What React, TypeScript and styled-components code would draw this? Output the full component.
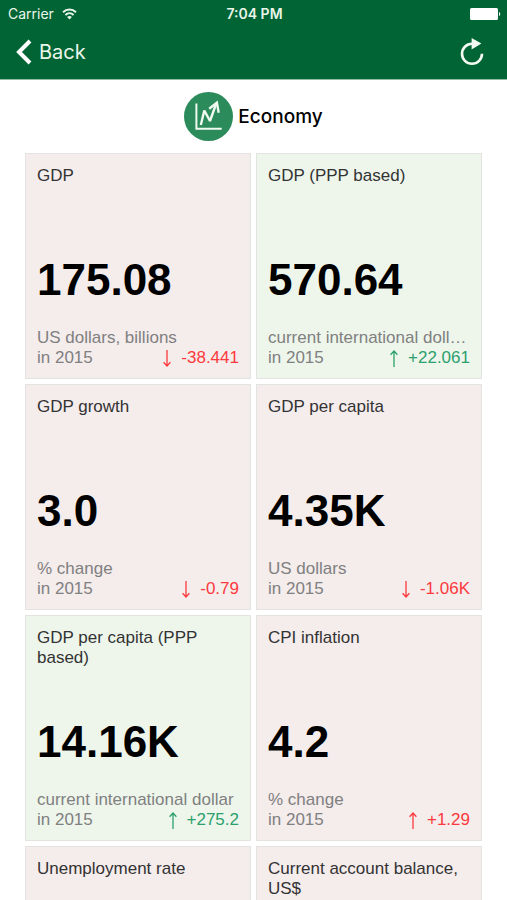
import React from "react";
import styled, { createGlobalStyle } from "styled-components";

const GlobalStyle = createGlobalStyle`
  * { box-sizing: border-box; }
  body { margin: 0; background: #ffffff; }
`;

const Screen = styled.div`
  display: flex;
  flex-direction: column;
  height: 100vh;
  background: #ffffff;
  color: #000000;
  font-family: "Liberation Sans", Arial, sans-serif;
`;

const Header = styled.header`
  flex: none;
  background: #006435;
  color: #eaf6ea;
  border-bottom: 1px solid #8fbca5;
  font-family: Inter, sans-serif;
`;

const StatusBar = styled.div`
  display: grid;
  grid-template-columns: 1fr auto 1fr;
  align-items: center;
  height: 28px;
  padding: 0 6px 0 8px;
  font-size: 14px;
  line-height: 20px;
`;

const Carrier = styled.div`
  display: flex;
  align-items: center;
  gap: 8px;
`;

const Clock = styled.time`
  font-size: 14px;
  font-weight: 600;
`;

const Battery = styled.svg`
  justify-self: end;
`;

const NavBar = styled.nav`
  display: flex;
  align-items: center;
  justify-content: space-between;
  height: 51px;
  padding: 0 23px 3px 16px;
`;

const NavButton = styled.button`
  display: flex;
  align-items: center;
  gap: 7px;
  padding: 0;
  border: 0;
  background: none;
  color: inherit;
  font: inherit;
  font-size: 20px;
  line-height: 28px;
  cursor: pointer;
`;

const Content = styled.main`
  flex: 1;
  min-height: 0;
  overflow-y: auto;
  scrollbar-width: none;
`;

const SectionHeading = styled.h1`
  display: flex;
  align-items: center;
  justify-content: center;
  gap: 5px;
  height: 73px;
  margin: 0;
  font-family: Inter, sans-serif;
  font-size: 19px;
  font-weight: 500;
  line-height: 24px;
`;

const CardGrid = styled.div`
  display: grid;
  grid-template-columns: repeat(2, minmax(0, 1fr));
  gap: 5px;
  padding: 0 25px;
`;

type Tone = "good" | "bad";

const Card = styled.article<{ $tone: Tone }>`
  display: flex;
  flex-direction: column;
  aspect-ratio: 1;
  padding: 12px 11px 10px;
  border: 1px solid #e3e3e1;
  background: ${({ $tone }) => ($tone === "good" ? "#eef6ec" : "#f5ecec")};
`;

const CardTitle = styled.h2`
  margin: 0;
  color: #333333;
  font-size: 17px;
  font-weight: 400;
  line-height: 20px;
`;

const Value = styled.div`
  margin-top: auto;
  font-size: 44px;
  font-weight: 700;
  line-height: 52px;
`;

const Unit = styled.div`
  margin-top: 22px;
  overflow: hidden;
  color: #808080;
  font-size: 17px;
  line-height: 20px;
  text-overflow: ellipsis;
  white-space: nowrap;
`;

const CardFooter = styled.div`
  display: flex;
  justify-content: space-between;
  color: #808080;
  font-size: 17px;
  line-height: 20px;
`;

const Change = styled.span<{ $tone: Tone }>`
  display: flex;
  align-items: center;
  gap: 9px;
  color: ${({ $tone }) => ($tone === "good" ? "#2ba06c" : "#fb3a3d")};
`;

function WifiIcon() {
  return (
    <svg width="15" height="12" viewBox="0 0 15 12" fill="none" stroke="currentColor" strokeWidth="2" aria-hidden="true">
      <path d="M1 4.2C4.7 .6 10.3 .6 14 4.2" />
      <path d="M3.4 6.9C5.8 4.7 9.2 4.7 11.6 6.9" />
      <path d="M7.5 11.4L5.1 8.9C6.4 7.8 8.6 7.8 9.9 8.9Z" fill="currentColor" stroke="none" />
    </svg>
  );
}

function BackIcon() {
  return (
    <svg width="16" height="26" viewBox="0 0 16 26" fill="none" stroke="#ffffff" strokeWidth="4" aria-hidden="true">
      <path d="M14 2L3 13L14 24" />
    </svg>
  );
}

function ReloadIcon() {
  return (
    <svg width="24" height="28" viewBox="0 0 24 28" fill="none" aria-hidden="true">
      <path d="M12 5.8A10 10 0 1 0 22 15.8" stroke="#f4fbf2" strokeWidth="2.6" />
      <path d="M11.6 0V11.6L21.4 5.6Z" fill="#f4fbf2" />
    </svg>
  );
}

function EconomyIcon() {
  return (
    <svg width="49" height="49" viewBox="0 0 49 49" fill="none" aria-hidden="true">
      <circle cx="24.5" cy="24.5" r="24.5" fill="#2b8b5b" />
      <g stroke="#effaf0">
        <path d="M12.4 11.5V36.8H37.7" strokeWidth="2" />
        <path d="M16.8 33L20.3 18.5L26 29L32.4 11" strokeWidth="2.4" strokeLinejoin="bevel" />
        <path d="M25.2 16.8L32.9 10.6L34.7 20.8" strokeWidth="2.4" />
      </g>
    </svg>
  );
}

function ArrowIcon({ up }: { up: boolean }) {
  return (
    <svg width="10" height="17" viewBox="0 0 10 17" fill="none" stroke="currentColor" strokeWidth="1.3" aria-hidden="true">
      <path d={up ? "M5 17V1M1.6 4.8L5 1L8.4 4.8" : "M5 0V16M1.6 12.2L5 16L8.4 12.2"} />
    </svg>
  );
}

interface Indicator {
  title: string;
  tone: Tone;
  value?: string;
  unit?: string;
  period?: string;
  change?: string;
}

const indicators: Indicator[] = [
  { title: "GDP", tone: "bad", value: "175.08", unit: "US dollars, billions", period: "in 2015", change: "-38.441" },
  { title: "GDP (PPP based)", tone: "good", value: "570.64", unit: "current international doll…", period: "in 2015", change: "+22.061" },
  { title: "GDP growth", tone: "bad", value: "3.0", unit: "% change", period: "in 2015", change: "-0.79" },
  { title: "GDP per capita", tone: "bad", value: "4.35K", unit: "US dollars", period: "in 2015", change: "-1.06K" },
  { title: "GDP per capita (PPP based)", tone: "good", value: "14.16K", unit: "current international dollar", period: "in 2015", change: "+275.2" },
  { title: "CPI inflation", tone: "bad", value: "4.2", unit: "% change", period: "in 2015", change: "+1.29" },
  { title: "Unemployment rate", tone: "bad" },
  { title: "Current account balance, US$", tone: "bad" },
];

function IndicatorCard({ title, tone, value, unit, period, change }: Indicator) {
  return (
    <Card $tone={tone}>
      <CardTitle>{title}</CardTitle>
      {value && <Value>{value}</Value>}
      {unit && <Unit>{unit}</Unit>}
      {change && (
        <CardFooter>
          <span>{period}</span>
          <Change $tone={tone}>
            <ArrowIcon up={change.startsWith("+")} />
            {change}
          </Change>
        </CardFooter>
      )}
    </Card>
  );
}

export default function App() {
  return (
    <Screen>
      <GlobalStyle />
      <Header>
        <StatusBar>
          <Carrier>
            Carrier
            <WifiIcon />
          </Carrier>
          <Clock>7:04 PM</Clock>
          <Battery width="31" height="12" viewBox="0 0 31 12" fill="#ffffff" aria-hidden="true">
            <rect width="28" height="12" rx="1.5" />
            <path d="M29 4C30.6 4.4 30.6 7.6 29 8Z" />
          </Battery>
        </StatusBar>
        <NavBar>
          <NavButton type="button">
            <BackIcon />
            Back
          </NavButton>
          <NavButton type="button" aria-label="Refresh">
            <ReloadIcon />
          </NavButton>
        </NavBar>
      </Header>
      <Content>
        <SectionHeading>
          <EconomyIcon />
          Economy
        </SectionHeading>
        <CardGrid>
          {indicators.map((item) => (
            <IndicatorCard key={item.title} {...item} />
          ))}
        </CardGrid>
      </Content>
    </Screen>
  );
}
